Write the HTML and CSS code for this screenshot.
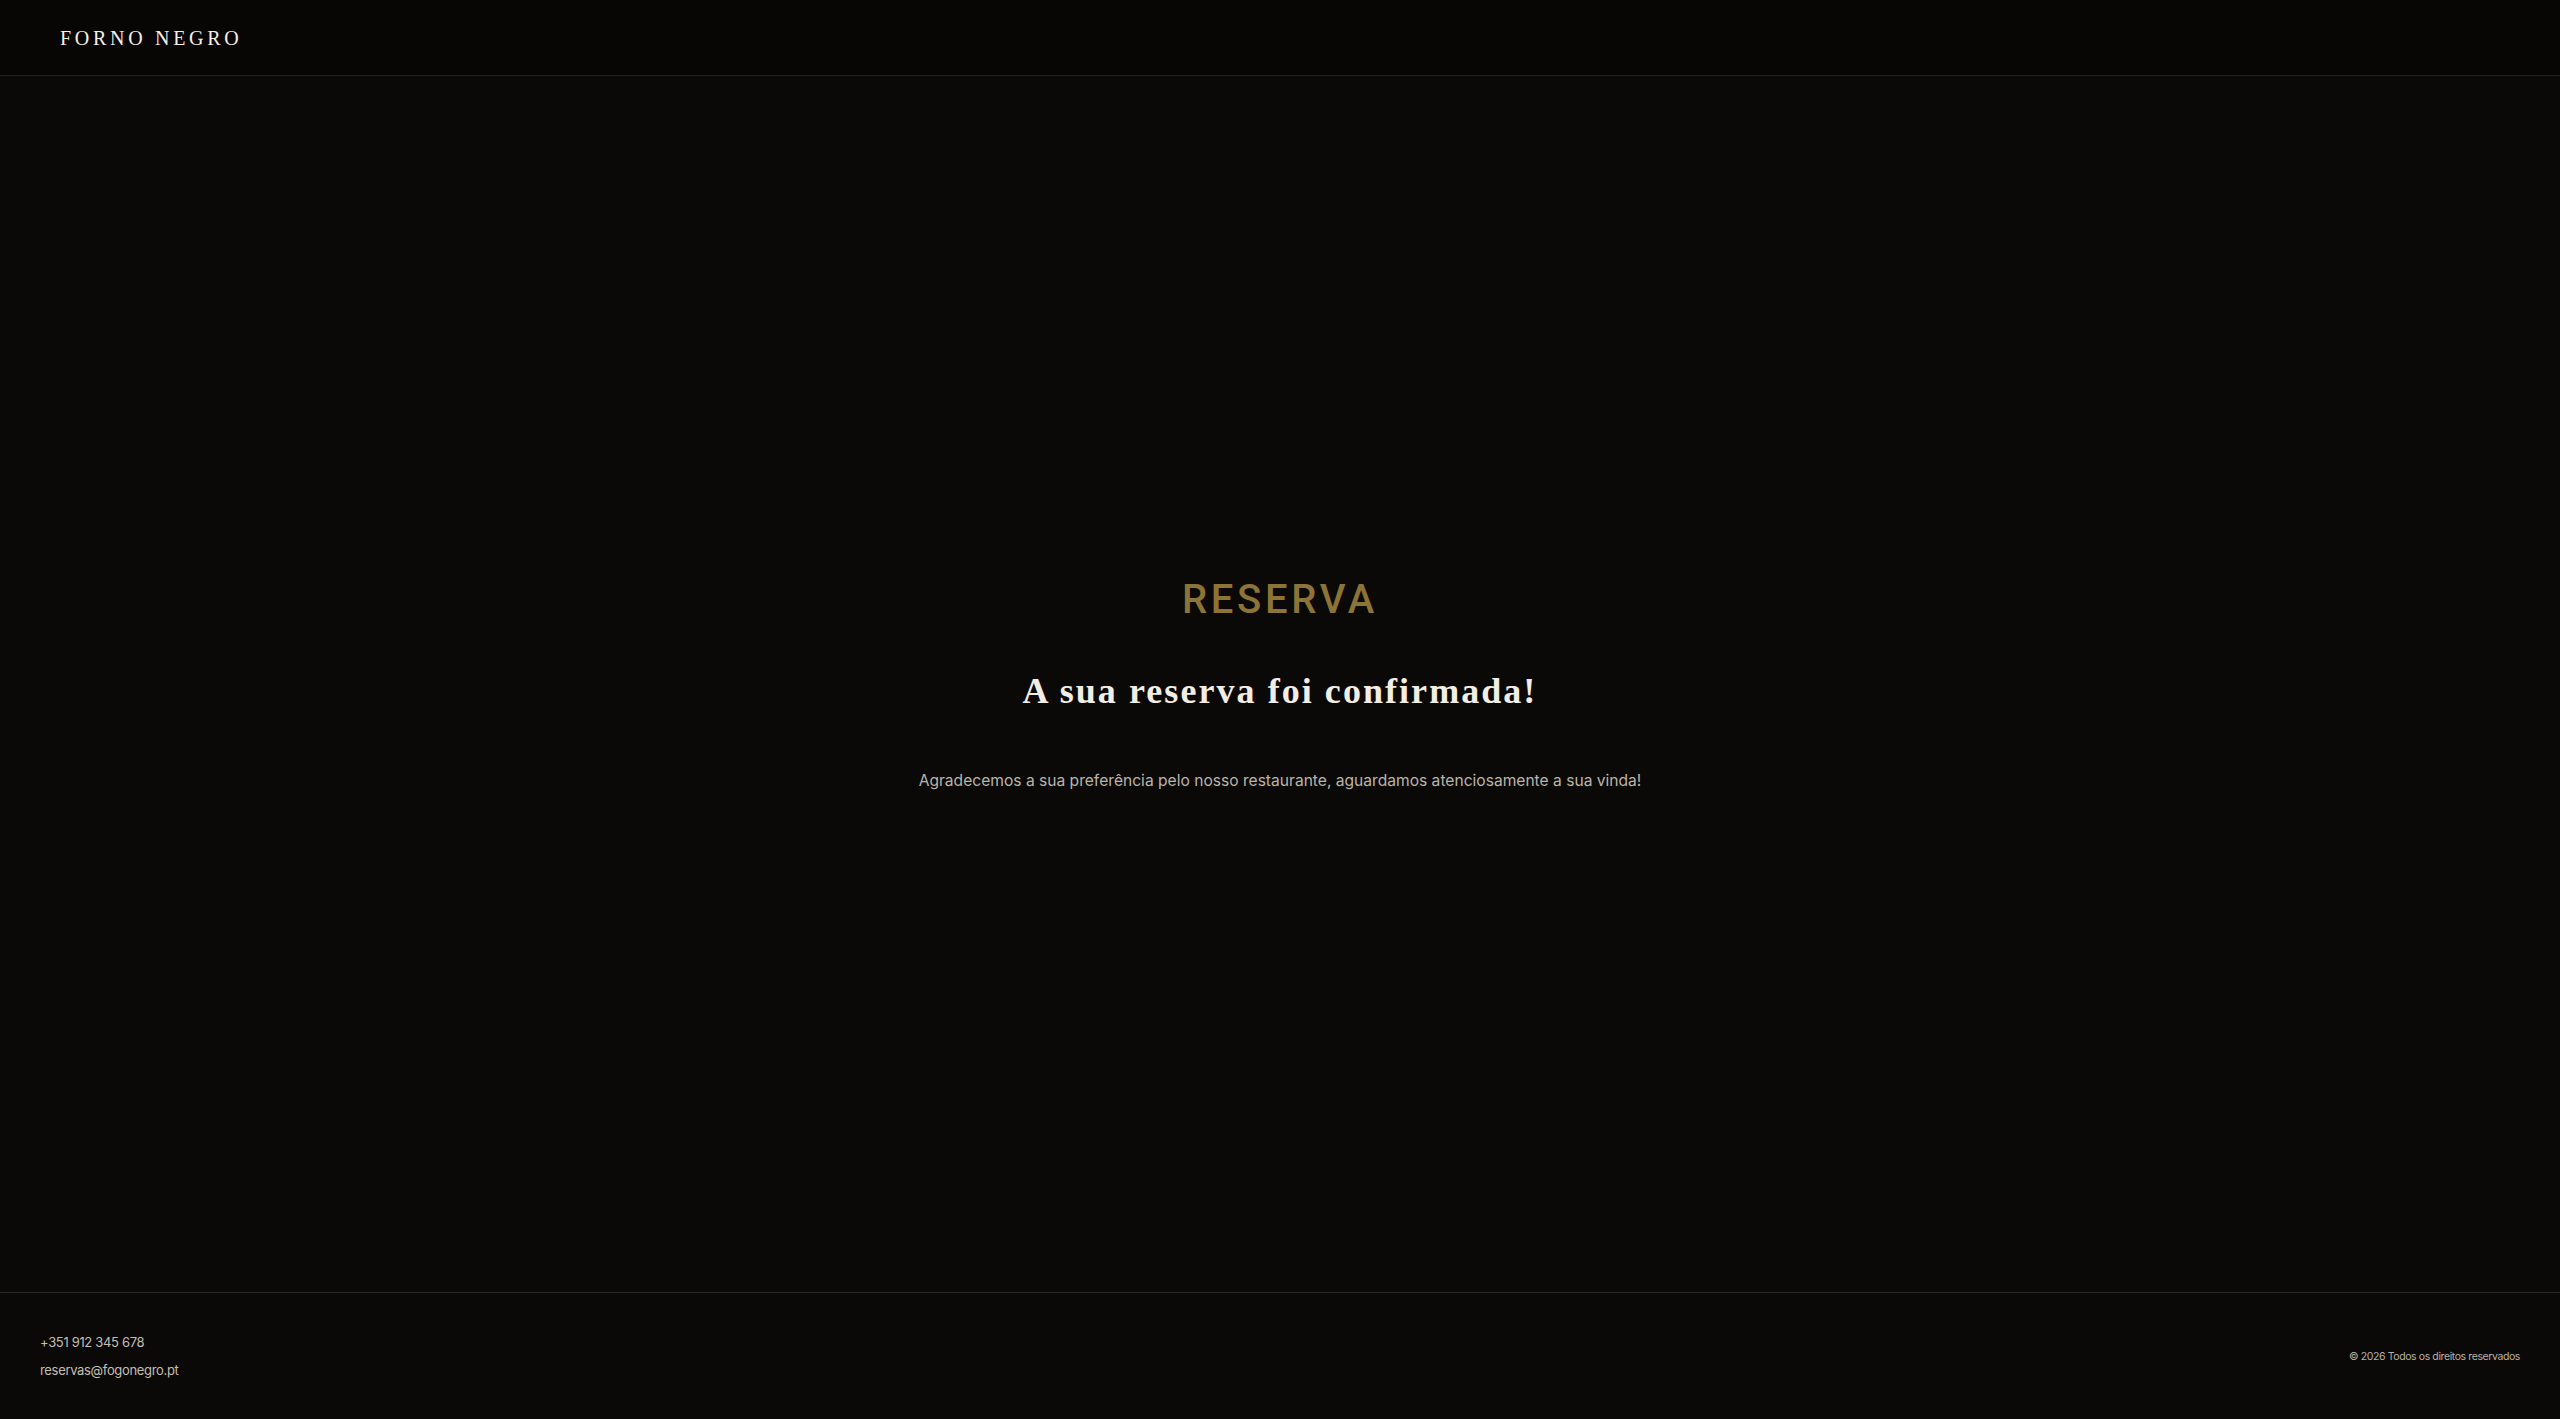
FILE: index.html
```html
<!DOCTYPE html>
<html lang="pt">
<head>
<meta charset="utf-8">
<title>Forno Negro - Reserva</title>
<link rel="stylesheet" href="styles.css">
</head>
<body>
<div class="page">
  <header class="site-header">
    <div class="logo">FORNO NEGRO</div>
  </header>
  <main class="main">
    <section class="confirm">
      <h2 class="eyebrow">RESERVA</h2>
      <h1 class="title">A sua reserva foi confirmada!</h1>
      <p class="message">Agradecemos a sua preferência pelo nosso restaurante, aguardamos atenciosamente a sua vinda!</p>
    </section>
  </main>
  <footer class="site-footer">
    <div class="contacts">
      <span class="contact">+351 912 345 678</span>
      <span class="contact">reservas@fogonegro.pt</span>
    </div>
    <div class="copy">© 2026 Todos os direitos reservados</div>
  </footer>
</div>
</body>
</html>
```
FILE: styles.css
```css
* { box-sizing: border-box; }
html, body { margin: 0; padding: 0; height: 100%; }
body {
  background: #0b0907;
  color: #f3ede4;
  font-family: Inter, "Noto Sans", sans-serif;
}
.page {
  min-height: 100vh;
  display: flex;
  flex-direction: column;
}
.site-header {
  height: 76px;
  background: #070604;
  border-bottom: 1px solid #24221e;
  display: flex;
  align-items: center;
  padding-left: 60px;
}
.logo {
  font-family: "Liberation Serif", "DejaVu Serif", serif;
  font-size: 20px;
  letter-spacing: 0.185em;
  color: #f4efe6;
  line-height: 1;
}
.main {
  flex: 1;
  display: flex;
  align-items: center;
  justify-content: center;
}
.confirm {
  display: flex;
  flex-direction: column;
  align-items: center;
  text-align: center;
}
.eyebrow {
  margin: 0;
  font-family: Roboto, Inter, sans-serif;
  font-weight: 500;
  font-size: 40px;
  letter-spacing: 0.092em;
  color: #8c7336;
  line-height: 48px;
}
.title {
  margin: 45px 0 0;
  font-family: "Liberation Serif", "DejaVu Serif", serif;
  font-weight: 700;
  font-size: 36px;
  letter-spacing: 0.057em;
  color: #f3ede4;
  line-height: 44px;
}
.message {
  margin: 57px 0 0;
  font-size: 15.6px;
  color: #bab4aa;
  line-height: 22px;
}
.site-footer {
  height: 127px;
  border-top: 1px solid #2c2a26;
  display: flex;
  align-items: center;
  justify-content: space-between;
  padding: 0 40px;
}
.contacts {
  display: flex;
  flex-direction: column;
  gap: 12px;
  font-size: 13px;
  letter-spacing: -0.33px;
  color: #c4beb4;
}
.copy {
  font-size: 10.5px;
  letter-spacing: -0.4px;
  color: #b8b2a8;
}
```
